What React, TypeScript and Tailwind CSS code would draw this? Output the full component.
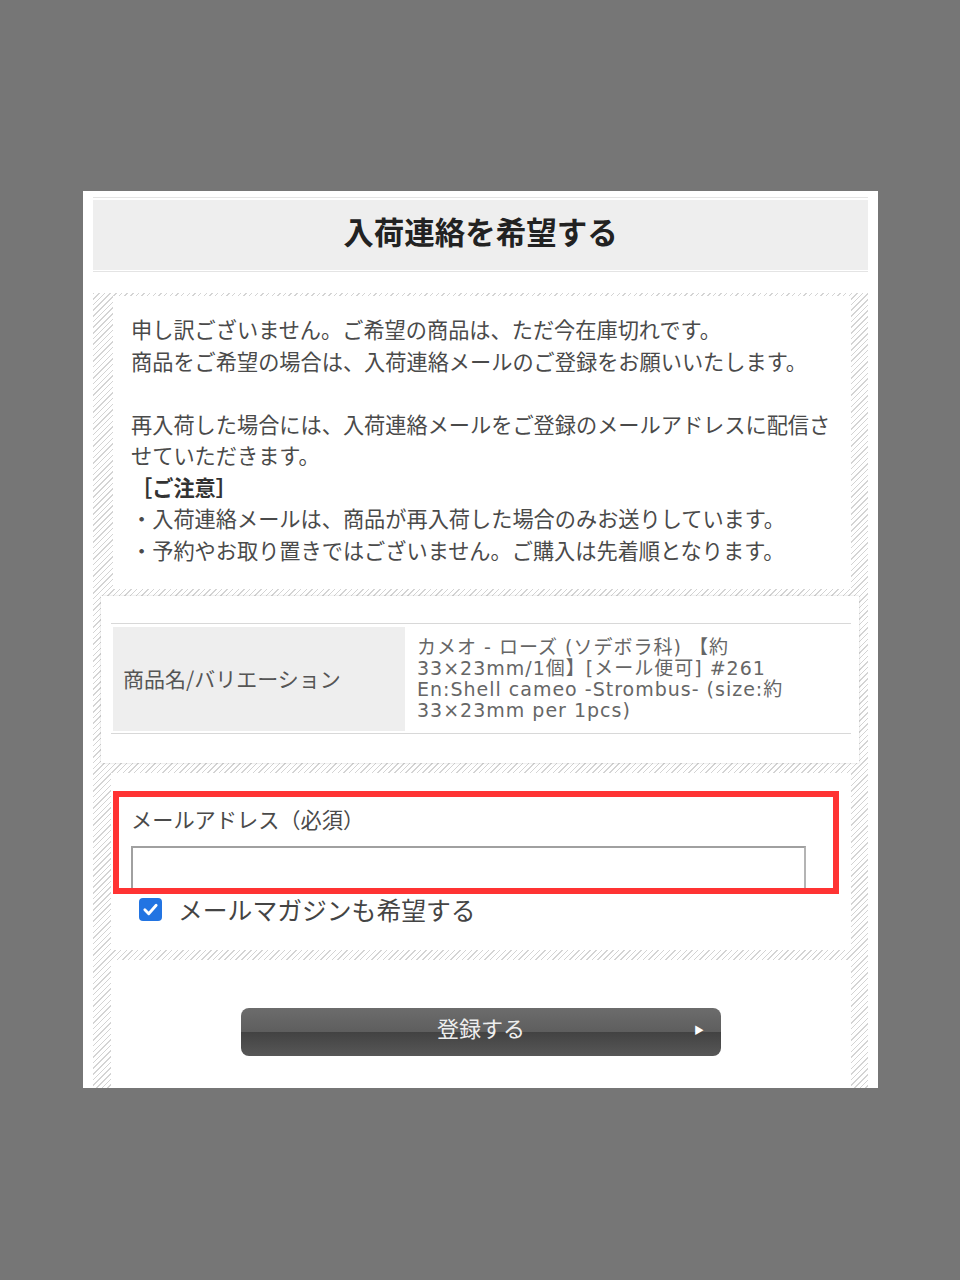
const font = { fontFamily: '"Noto Sans CJK JP", "Noto Sans", sans-serif' };
const wideFont = { fontFamily: '"DejaVu Sans", "Noto Sans CJK JP", sans-serif' };

const hatch =
  'bg-[repeating-linear-gradient(135deg,#d4d4d4_0px,#d4d4d4_1px,#ffffff_1px,#ffffff_4px)]';

export default function App() {
  return (
    <div className="min-h-[1280px] bg-[#767676] pt-[191px]" style={font}>
      <div className="ml-[83px] h-[897px] w-[795px] overflow-hidden bg-white px-[10px] pt-[6px]">
        {/* Title */}
        <div className="border-y border-[#e4e4e4] pt-[2px] pb-[1px]">
          <div className="flex h-[70px] items-center justify-center bg-[#eeeeee] pb-[6px]">
            <h1 className="text-[30.5px] font-bold text-[#222]">入荷連絡を希望する</h1>
          </div>
        </div>

        {/* Hatched body */}
        <div className={`mt-[21px] pt-[3px] pb-[40px] ${hatch}`}>
          {/* Notice */}
          <div className="ml-[20px] mr-[17px] bg-white px-[18px] pt-[17px] pb-[24px] text-[21.2px] leading-[31.5px] text-[#4a4a4a]">
            <p>申し訳ございません。ご希望の商品は、ただ今在庫切れです。</p>
            <p>商品をご希望の場合は、入荷連絡メールのご登録をお願いいたします。</p>
            <p>&nbsp;</p>
            <p>再入荷した場合には、入荷連絡メールをご登録のメールアドレスに配信させていただきます。</p>
            <p className="font-semibold text-[#333]">［ご注意］</p>
            <p>・入荷連絡メールは、商品が再入荷した場合のみお送りしています。</p>
            <p>・予約やお取り置きではございません。ご購入は先着順となります。</p>
          </div>

          {/* Product */}
          <div className="mt-[7px] ml-[8px] mr-[9px] bg-white pt-[27px] pb-[29px] pl-[10px] pr-[8px] shadow-[0_0_2px_rgba(0,0,0,0.18)]">
            <div className="flex gap-[2px] border-y border-[#d8d8d8] px-[2px] pt-[3px] pb-[2px]">
              <div className="flex h-[104px] w-[292px] items-center bg-[#eeeeee] pl-[10px] text-[21px] text-[#555]">
                商品名/バリエーション
              </div>
              <div
                className="flex-1 whitespace-nowrap pl-[10px] pt-[10px] text-[19px] leading-[21px] tracking-[1px] text-[#666]"
                style={wideFont}
              >
                カメオ - ローズ (ソデボラ科) 【約
                <br />
                33×23mm/1個】[メール便可] #261
                <br />
                En:Shell cameo -Strombus- (size:約
                <br />
                33×23mm per 1pcs)
              </div>
            </div>
          </div>

          {/* Email */}
          <div className="relative mt-[10px] ml-[18px] mr-[17px] bg-white pt-[30px] pb-[27px] pl-[20px]">
            <label className="block text-[21.2px] leading-[31px] text-[#4a4a4a]">メールアドレス（必須）</label>
            <div className="mt-[12px] h-[44px] w-[675px] border-2 border-[#b4b4b4] border-t-[#a0a0a0] border-l-[#a0a0a0] bg-white" />
            <div className="mt-[5px] flex items-center gap-[16px] pl-[8px]">
              <div className="flex h-[23px] w-[23px] items-center justify-center rounded-[4px] bg-[#2274e2]">
                <svg width="17" height="17" viewBox="0 0 24 24" fill="none" stroke="white" strokeWidth="4" strokeLinecap="round" strokeLinejoin="round">
                  <polyline points="4,12.5 9.5,18 20,6" />
                </svg>
              </div>
              <span className="text-[24.8px] leading-[28px] text-[#444]">メールマガジンも希望する</span>
            </div>
            {/* red annotation frame */}
            <div className="pointer-events-none absolute top-[18px] left-[2px] h-[103px] w-[726px] border-[6px] border-[#ff3333]" />
          </div>

          {/* Submit */}
          <div className="mt-[10px] ml-[18px] mr-[17px] bg-white pt-[48px] pb-[60px]">
            <button className="relative mx-auto flex h-[48px] w-[480px] items-center justify-center rounded-[8px] bg-[linear-gradient(#6c6c6c,#5e5e5e_50%,#424242_50%,#575757)] pb-[11px] text-[22px] leading-none text-[#eeeeee]">
              登録する
              <span className="absolute top-[17px] right-[17px] text-[10px] leading-none text-white">▶</span>
            </button>
          </div>
        </div>
      </div>
    </div>
  );
}
